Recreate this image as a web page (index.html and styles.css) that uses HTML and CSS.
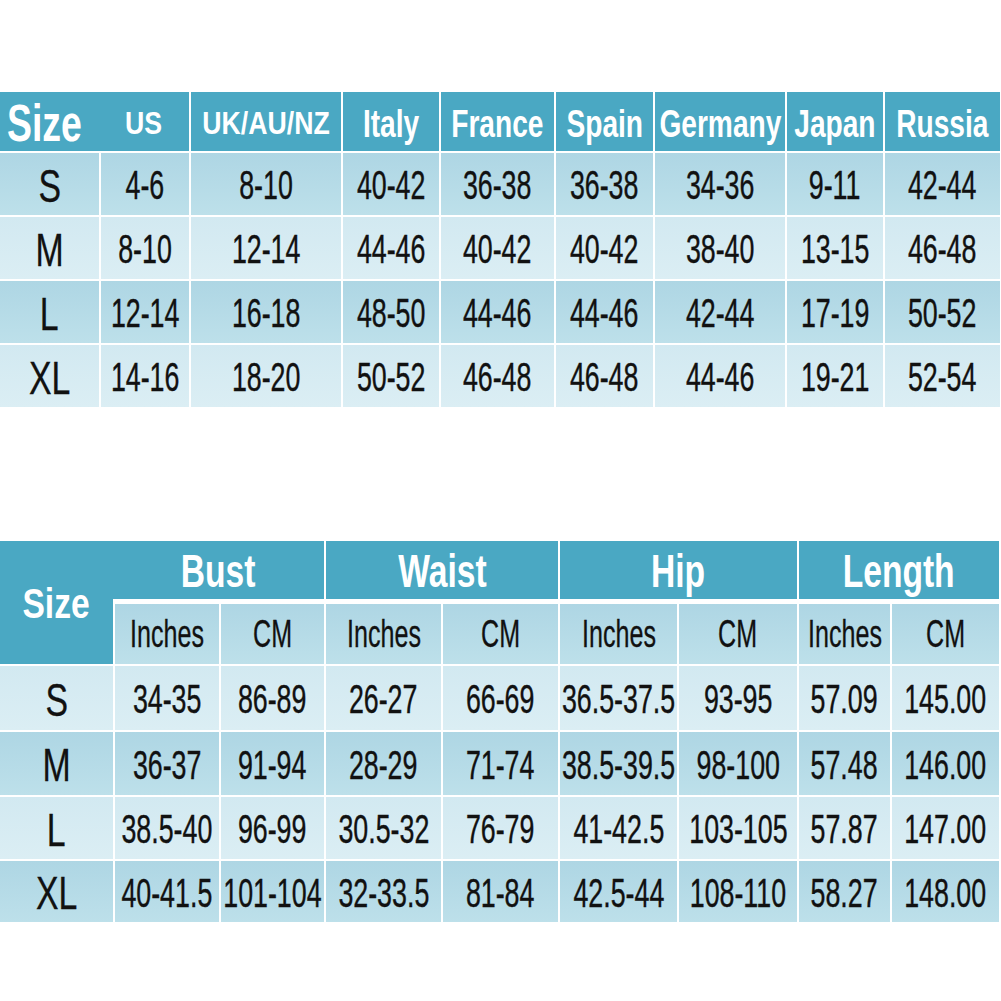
FILE: index.html
```html
<!DOCTYPE html>
<html lang="en">
<head>
<meta charset="utf-8">
<title>Size Chart</title>
<link rel="stylesheet" href="styles.css">
</head>
<body>
<div class="page">
  <div class="grid conv">
    <div class="c hd size-hd"><span class="t big">Size</span></div>
    <div class="c hd join"><span class="t sm">US</span></div>
    <div class="c hd"><span class="t sm">UK/AU/NZ</span></div>
    <div class="c hd"><span class="t h">Italy</span></div>
    <div class="c hd"><span class="t h">France</span></div>
    <div class="c hd"><span class="t h">Spain</span></div>
    <div class="c hd"><span class="t h">Germany</span></div>
    <div class="c hd"><span class="t h">Japan</span></div>
    <div class="c hd"><span class="t h">Russia</span></div>

    <div class="c dk"><span class="t sz">S</span></div>
    <div class="c dk"><span class="t v">4-6</span></div>
    <div class="c dk"><span class="t v">8-10</span></div>
    <div class="c dk"><span class="t v">40-42</span></div>
    <div class="c dk"><span class="t v">36-38</span></div>
    <div class="c dk"><span class="t v">36-38</span></div>
    <div class="c dk"><span class="t v">34-36</span></div>
    <div class="c dk"><span class="t v">9-11</span></div>
    <div class="c dk"><span class="t v">42-44</span></div>

    <div class="c lt"><span class="t sz">M</span></div>
    <div class="c lt"><span class="t v">8-10</span></div>
    <div class="c lt"><span class="t v">12-14</span></div>
    <div class="c lt"><span class="t v">44-46</span></div>
    <div class="c lt"><span class="t v">40-42</span></div>
    <div class="c lt"><span class="t v">40-42</span></div>
    <div class="c lt"><span class="t v">38-40</span></div>
    <div class="c lt"><span class="t v">13-15</span></div>
    <div class="c lt"><span class="t v">46-48</span></div>

    <div class="c dk"><span class="t sz">L</span></div>
    <div class="c dk"><span class="t v">12-14</span></div>
    <div class="c dk"><span class="t v">16-18</span></div>
    <div class="c dk"><span class="t v">48-50</span></div>
    <div class="c dk"><span class="t v">44-46</span></div>
    <div class="c dk"><span class="t v">44-46</span></div>
    <div class="c dk"><span class="t v">42-44</span></div>
    <div class="c dk"><span class="t v">17-19</span></div>
    <div class="c dk"><span class="t v">50-52</span></div>

    <div class="c lt"><span class="t sz">XL</span></div>
    <div class="c lt"><span class="t v">14-16</span></div>
    <div class="c lt"><span class="t v">18-20</span></div>
    <div class="c lt"><span class="t v">50-52</span></div>
    <div class="c lt"><span class="t v">46-48</span></div>
    <div class="c lt"><span class="t v">46-48</span></div>
    <div class="c lt"><span class="t v">44-46</span></div>
    <div class="c lt"><span class="t v">19-21</span></div>
    <div class="c lt"><span class="t v">52-54</span></div>
  </div>

  <div class="grid meas">
    <div class="c hd msize"><span class="t msz">Size</span></div>
    <div class="c hd grp join"><span class="t g">Bust</span></div>
    <div class="c hd grp"><span class="t g">Waist</span></div>
    <div class="c hd grp"><span class="t g">Hip</span></div>
    <div class="c hd grp"><span class="t g">Length</span></div>

    <div class="c dk"><span class="t sub">Inches</span></div>
    <div class="c dk"><span class="t sub">CM</span></div>
    <div class="c dk"><span class="t sub">Inches</span></div>
    <div class="c dk"><span class="t sub">CM</span></div>
    <div class="c dk"><span class="t sub">Inches</span></div>
    <div class="c dk"><span class="t sub">CM</span></div>
    <div class="c dk"><span class="t sub">Inches</span></div>
    <div class="c dk"><span class="t sub">CM</span></div>

    <div class="c lt"><span class="t sz">S</span></div>
    <div class="c lt"><span class="t v">34-35</span></div>
    <div class="c lt"><span class="t v">86-89</span></div>
    <div class="c lt"><span class="t v">26-27</span></div>
    <div class="c lt"><span class="t v">66-69</span></div>
    <div class="c lt"><span class="t v">36.5-37.5</span></div>
    <div class="c lt"><span class="t v">93-95</span></div>
    <div class="c lt"><span class="t v">57.09</span></div>
    <div class="c lt"><span class="t v">145.00</span></div>

    <div class="c dk"><span class="t sz">M</span></div>
    <div class="c dk"><span class="t v">36-37</span></div>
    <div class="c dk"><span class="t v">91-94</span></div>
    <div class="c dk"><span class="t v">28-29</span></div>
    <div class="c dk"><span class="t v">71-74</span></div>
    <div class="c dk"><span class="t v">38.5-39.5</span></div>
    <div class="c dk"><span class="t v">98-100</span></div>
    <div class="c dk"><span class="t v">57.48</span></div>
    <div class="c dk"><span class="t v">146.00</span></div>

    <div class="c lt"><span class="t sz">L</span></div>
    <div class="c lt"><span class="t v">38.5-40</span></div>
    <div class="c lt"><span class="t v">96-99</span></div>
    <div class="c lt"><span class="t v">30.5-32</span></div>
    <div class="c lt"><span class="t v">76-79</span></div>
    <div class="c lt"><span class="t v">41-42.5</span></div>
    <div class="c lt"><span class="t v">103-105</span></div>
    <div class="c lt"><span class="t v">57.87</span></div>
    <div class="c lt"><span class="t v">147.00</span></div>

    <div class="c dk"><span class="t sz">XL</span></div>
    <div class="c dk"><span class="t v">40-41.5</span></div>
    <div class="c dk"><span class="t v">101-104</span></div>
    <div class="c dk"><span class="t v">32-33.5</span></div>
    <div class="c dk"><span class="t v">81-84</span></div>
    <div class="c dk"><span class="t v">42.5-44</span></div>
    <div class="c dk"><span class="t v">108-110</span></div>
    <div class="c dk"><span class="t v">58.27</span></div>
    <div class="c dk"><span class="t v">148.00</span></div>
  </div>
</div>
</body>
</html>
```

FILE: styles.css
```css
* { box-sizing: border-box; }
html, body {
  margin: 0;
  padding: 0;
  background: #ffffff;
}
body {
  font-family: "Liberation Sans", Arial, sans-serif;
  color: #111111;
  width: 1001px;
  height: 1001px;
  overflow: hidden;
}
.page {
  display: flex;
  flex-direction: column;
  padding-top: 92px;
}
.grid {
  display: grid;
  gap: 2px;
  background: #ffffff;
}
.conv {
  grid-template-columns: 99px 88px 150px 96px 113px 97px 130px 96px 115px;
  grid-template-rows: 59px repeat(4, 62px);
}
.meas {
  margin-top: 134px;
  grid-template-columns: 113px 104px 103px 115px 115px 117px 118px 91px 107px;
  grid-template-rows: 61px 60px 64px 63px 62px 61px;
}
.c {
  display: flex;
  align-items: center;
  justify-content: center;
  overflow: visible;
  white-space: nowrap;
}
.hd {
  background: #4aa8c3;
  color: #ffffff;
  font-weight: bold;
}
.join { margin-left: -2px; }
.size-hd {
  justify-content: flex-start;
  padding-left: 7px;
}
.dk { background: linear-gradient(#aed6e4, #bde0ea); }
.lt { background: linear-gradient(#d2e9f1, #dbeef4); }

.msize { grid-row: span 2; }
.grp {
  grid-column: span 2;
  margin-bottom: 3px;
}
.t {
  display: inline-block;
  transform-origin: center;
  line-height: 1;
}
.big {
  font-size: 52px;
  transform: scaleX(0.72);
  transform-origin: left center;
  margin-top: 3px;
}
.sm {
  font-size: 31px;
  transform: scaleX(0.86);
  margin-top: 4px;
}
.h {
  font-size: 38px;
  transform: scaleX(0.74);
  margin-top: 4px;
}
.sz {
  font-size: 47px;
  transform: scaleX(0.72);
  -webkit-text-stroke: 0.3px #111111;
  margin-top: 2px;
}
.v {
  font-size: 40px;
  transform: scaleX(0.67);
  -webkit-text-stroke: 0.4px #111111;
  margin-top: 2px;
}
.g {
  font-size: 46px;
  transform: scaleX(0.73);
  margin-top: 2px;
}
.msz {
  font-size: 42px;
  transform: scaleX(0.8);
  margin-top: 2px;
}
.sub {
  font-size: 38px;
  transform: scaleX(0.66);
  -webkit-text-stroke: 0.3px #111111;
}
```
